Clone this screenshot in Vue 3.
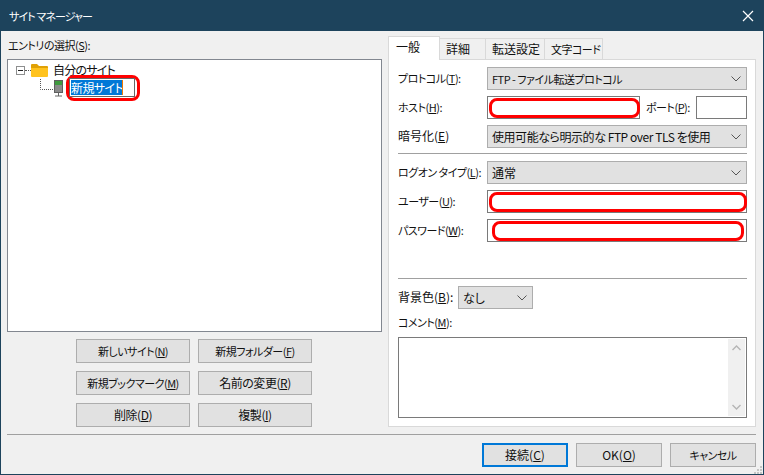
<script setup>
const leftButtons = [
  { pre: '新しいサイト(', key: 'N', k: true }, { pre: '新規フォルダー(', key: 'F', k: true },
  { pre: '新規ブックマーク(', key: 'M', k: true }, { pre: '名前の変更(', key: 'R', t: true },
  { pre: '削除(', key: 'D', t: true }, { pre: '複製(', key: 'I', t: true },
]
const tabs = [
  { label: '一般', width: 52, active: true },
  { label: '詳細', width: 46 },
  { label: '転送設定', width: 59 },
  { label: '文字コード', width: 58, k: true },
]
const footer = [
  { pre: '接続(', key: 'C', post: ')', primary: true },
  { pre: 'OK(', key: 'O', post: ')' },
  { pre: 'キャンセル', key: '', post: '', k: true },
]
</script>

<template>
  <div class="window">
    <header class="title">
      <span class="title-text">サイト マネージャー</span>
      <svg class="close" width="12" height="12" viewBox="0 0 12 12"><path d="M1 1l10 10M11 1L1 11" stroke="#fff" stroke-width="1.2" fill="none"/></svg>
    </header>

    <div class="main">
      <section class="left">
        <div class="entry-label k">エントリの選択(<u>S</u>):</div>
        <div class="tree">
          <div class="node root">
            <span class="expander"></span>
            <span class="dots-h"></span>
            <svg width="17" height="14" viewBox="0 0 17 14"><path d="M0 2a1 1 0 0 1 1-1h5l2 2h8a1 1 0 0 1 1 1v2H0z" fill="#e0a106"/><path d="M0 5h17v8a1 1 0 0 1-1 1H1a1 1 0 0 1-1-1z" fill="#ffc31f"/></svg>
            <span class="root-name">自分のサイト</span>
          </div>
          <div class="node child">
            <svg class="connector" width="13" height="11" viewBox="0 0 13 11"><path d="M.5 0v10.5H13" stroke="#555" stroke-dasharray="1 1" fill="none"/></svg>
            <svg class="server" width="9" height="17" viewBox="0 0 9 17"><rect x="0" y="0" width="9" height="13" fill="#5f5f5f"/><rect x="1" y="1" width="7" height="4" fill="#3f9a3f"/><rect x="1" y="5" width="7" height="7" fill="#8a8a8a"/><rect x="4" y="13" width="1" height="3" fill="#666"/><rect x="1" y="15.5" width="7" height="1" fill="#666"/></svg>
            <div class="edit-ring">
              <div class="edit"><span class="selected">新規サイト</span><span class="caret"></span></div>
            </div>
          </div>
        </div>
        <div class="site-buttons">
          <button v-for="b in leftButtons" :key="b.key" class="btn" :class="{ k: b.k, t: b.t }">{{ b.pre }}<u>{{ b.key }}</u>)</button>
        </div>
      </section>

      <section class="right">
        <div class="tabs">
          <div v-for="t in tabs" :key="t.label" class="tab" :class="{ active: t.active, k: t.k }" :style="{ width: t.width + 'px' }">{{ t.label }}</div>
        </div>
        <div class="panel">
          <div class="row">
            <label class="k">プロトコル(<u>T</u>):</label>
            <div class="combo grow"><span class="k">FTP - ファイル転送プロトコル</span><svg class="chev" width="10" height="6" viewBox="0 0 10 6"><path d="M.5.5L5 5 9.5.5" stroke="#555" fill="none"/></svg></div>
          </div>
          <div class="row">
            <label class="k">ホスト(<u>H</u>):</label>
            <div class="input host"><i class="ring r-host"></i></div>
            <label class="port-label k">ポート(<u>P</u>):</label>
            <div class="input port"></div>
          </div>
          <div class="row">
            <label>暗号化(<u>E</u>)</label>
            <div class="combo grow"><span class="t">使用可能なら明示的な FTP over TLS を使用</span><svg class="chev" width="10" height="6" viewBox="0 0 10 6"><path d="M.5.5L5 5 9.5.5" stroke="#555" fill="none"/></svg></div>
          </div>
          <hr class="sep first" />
          <div class="row">
            <label class="k">ログオン タイプ(<u>L</u>):</label>
            <div class="combo grow"><span>通常</span><svg class="chev" width="10" height="6" viewBox="0 0 10 6"><path d="M.5.5L5 5 9.5.5" stroke="#555" fill="none"/></svg></div>
          </div>
          <div class="row">
            <label class="k">ユーザー(<u>U</u>):</label>
            <div class="input grow"><i class="ring r-user"></i></div>
          </div>
          <div class="row">
            <label class="k">パスワード(<u>W</u>):</label>
            <div class="input grow"><i class="ring r-pass"></i></div>
          </div>
          <hr class="sep second" />
          <div class="row bg-row">
            <label>背景色(<u>B</u>):</label>
            <div class="combo small"><span>なし</span><svg class="chev" width="10" height="6" viewBox="0 0 10 6"><path d="M.5.5L5 5 9.5.5" stroke="#555" fill="none"/></svg></div>
          </div>
          <div class="comment-label k">コメント(<u>M</u>):</div>
          <div class="textarea">
            <div class="scroll">
              <svg width="9" height="6" viewBox="0 0 9 6"><path d="M.5 5L4.5 1l4 4" stroke="#b5b5b5" stroke-width="1.4" fill="none"/></svg>
              <svg width="9" height="6" viewBox="0 0 9 6"><path d="M.5 1l4 4 4-4" stroke="#b5b5b5" stroke-width="1.4" fill="none"/></svg>
            </div>
          </div>
        </div>
      </section>
    </div>

    <footer class="footer">
      <hr class="footer-sep" />
      <div class="footer-buttons">
        <button v-for="b in footer" :key="b.pre" class="btn wide" :class="{ primary: b.primary, k: b.k }">{{ b.pre }}<u v-if="b.key">{{ b.key }}</u>{{ b.post }}</button>
      </div>
      <svg class="grip" width="10" height="10" viewBox="0 0 10 10" fill="#c4c4c4"><rect x="7" y="1" width="2" height="2"/><rect x="4" y="4" width="2" height="2"/><rect x="7" y="4" width="2" height="2"/><rect x="1" y="7" width="2" height="2"/><rect x="4" y="7" width="2" height="2"/><rect x="7" y="7" width="2" height="2"/></svg>
    </footer>
  </div>
</template>

<style>
html, body { margin: 0; overflow: hidden; background: #f0f0f0; }
</style>

<style scoped>
.window {
  position: relative;
  width: 764px;
  height: 475px;
  box-sizing: border-box;
  border: 1px solid #1d435c;
  border-top: 0;
  background: #f0f0f0;
  font: 12px/16px "Noto Sans CJK JP", "Noto Sans", sans-serif;
  font-feature-settings: "palt";
  color: #111;
  overflow: hidden;
}
u { text-underline-offset: 1px; }
.k { font-size: 11px; letter-spacing: -.5px; }
.t { letter-spacing: -.45px; }
.title {
  height: 31px;
  background: #1d435c;
  color: #fff;
  display: flex;
  align-items: center;
  justify-content: space-between;
  padding: 0 9px 0 8px;
}
.title-text { font-size: 11px; letter-spacing: -.9px; }
.main { display: flex; gap: 6px; padding-left: 6px; height: 403px; }
.left { width: 375px; }
.entry-label { height: 28px; line-height: 28px; padding-left: 1px; }
.tree {
  height: 273px;
  box-sizing: border-box;
  border: 1px solid #828790;
  background: #fff;
  padding: 3px 0 0 8px;
}
.node { display: flex; align-items: center; }
.root { height: 14px; }
.expander {
  width: 9px; height: 9px; box-sizing: border-box;
  border: 1px solid #8e8f8f; position: relative; background: #fff;
}
.expander::after { content: ""; position: absolute; left: 1px; right: 1px; top: 3px; height: 1px; background: #222; }
.dots-h { width: 6px; border-top: 1px dotted #555; }
.root-name { margin-left: 5px; letter-spacing: -.8px; }
.child { height: 26px; padding-left: 24px; margin-top: 2px; align-items: flex-start; }
.server { margin: 1px 0 0 1px; }
.edit-ring {
  width: 74px; height: 26px; box-sizing: border-box; margin: -4px 0 0 3px;
  border: 3px solid #f00; border-radius: 8px;
}
.edit {
  width: 66px; height: 19px; box-sizing: border-box;
  border: 1px solid #666; background: #fff; padding: 1px; display: flex;
}
.selected { background: #0078d7; color: #fff; height: 15px; line-height: 15px; width: 51px; white-space: nowrap; letter-spacing: -.6px; }
.caret { width: 1px; height: 15px; background: #f07800; }
.site-buttons {
  display: grid;
  grid-template-columns: 114px 114px;
  grid-auto-rows: 24px;
  gap: 8px;
  justify-content: start;
  margin: 7px 0 0 69px;
}
.btn {
  font-family: inherit; font-feature-settings: inherit; line-height: inherit; color: #111; padding: 0; box-sizing: border-box;
  font-size: 12px;
  background: #e1e1e1; border: 1px solid #adadad; white-space: nowrap;
}
.btn.k { font-size: 11px; }
.right { width: 368px; padding-top: 6px; }
.tabs { display: flex; height: 22px; align-items: flex-end; position: relative; z-index: 1; }
.tab {
  height: 21px; box-sizing: border-box; border: 1px solid #d9d9d9; border-left: 0; border-bottom: 0;
  background: #f0f0f0; padding: 2px 0 0 6px; white-space: nowrap;
}
.tab.active {
  height: 24px; margin-bottom: -1px; background: #fff; border-left: 1px solid #d9d9d9;
  padding: 2px 0 0 7px;
}
.panel {
  height: 368px; box-sizing: border-box;
  border: 1px solid #d9d9d9; background: #fff;
  padding: 7px 8px 0 9px;
}
.row { display: flex; align-items: center; height: 23px; margin-bottom: 6px; }
.row > label { width: 89px; flex: none; white-space: nowrap; margin-top: -1px; }
.combo, .input { box-sizing: border-box; height: 23px; flex: none; }
.grow { width: 260px; }
.combo {
  background: #e1e1e1; border: 1px solid #adadad;
  display: flex; align-items: center; justify-content: space-between;
  padding: 0 4px 0 4px;
}
.chev { margin-right: 1px; }
.small { width: 75px; }
.input { border: 1px solid #7a7a7a; background: #fff; padding: 1px 0 0 1px; }
.host { width: 153px; }
.row > .port-label { width: 50px; margin-left: 6px; }
.port { width: 51px; }
.ring { display: block; box-sizing: border-box; border: 3px solid #f00; border-radius: 8px; height: 20px; }
.r-host { width: 151px; }
.r-user { width: 258px; }
.r-pass { width: 252px; margin-left: 3px; }
.sep { border: 0; height: 1px; background: #a0a0a0; margin: 0 0 7px; }
.sep.first { margin-top: -1px; }
.sep.second { margin-top: 36px; margin-bottom: 7px; }
.bg-row > label { width: 60px; }
.bg-row { margin-bottom: 5px; }
.comment-label { height: 16px; margin-bottom: 7px; }
.textarea {
  width: 349px; height: 81px; box-sizing: border-box; border: 1px solid #7a7a7a;
  padding: 1px; display: flex; justify-content: flex-end;
}
.scroll {
  width: 17px; background: #f0f0f0; display: flex; flex-direction: column;
  justify-content: space-between; align-items: center; padding: 6px 0;
}
.footer { position: relative; padding: 0 7px 0 6px; }
.footer-sep { border: 0; height: 1px; background: #a0a0a0; margin: 0; }
.footer-buttons { display: flex; justify-content: flex-end; gap: 8px; margin-top: 8px; }
.wide { width: 86px; height: 24px; }
.primary { border: 2px solid #0078d7; }
.grip { position: absolute; right: 0; bottom: -8px; }
</style>
